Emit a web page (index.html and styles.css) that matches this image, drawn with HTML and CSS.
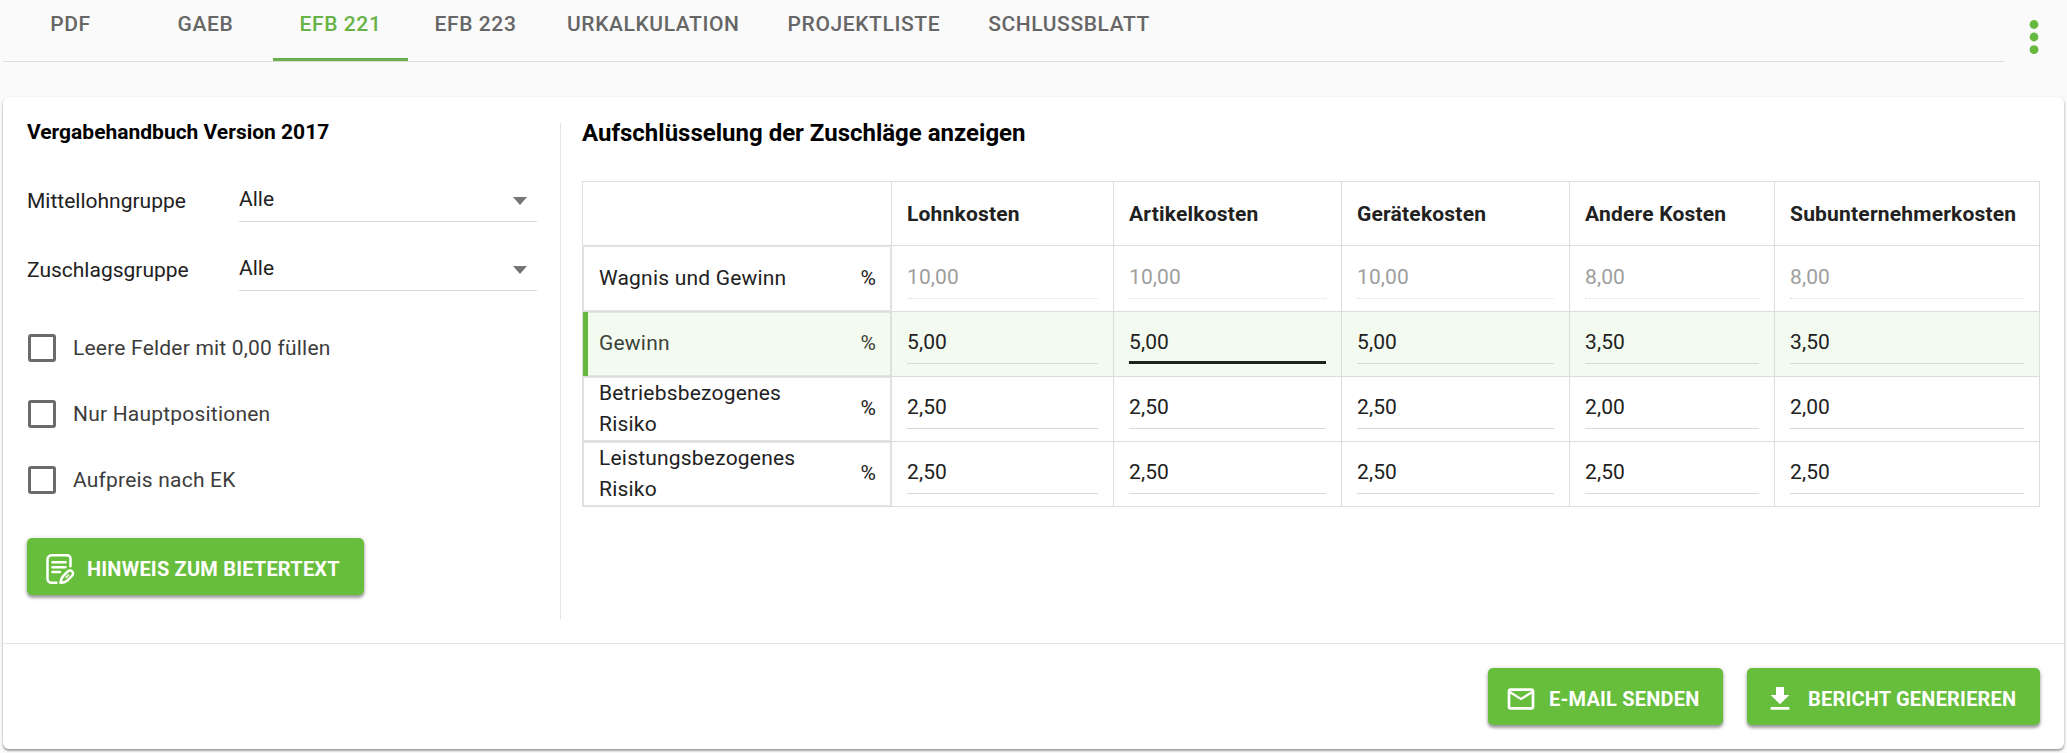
FILE: index.html
```
<!DOCTYPE html>
<html lang="de">
<head>
    <meta charset="utf-8">
    <title>EFB 221</title>
    <link rel="stylesheet" href="styles.css">
</head>
<body>
    <div class="topbar">
        <div class="tabs">
            <div class="tab">PDF</div>
            <div class="tab">GAEB</div>
            <div class="tab active">EFB 221</div>
            <div class="tab">EFB 223</div>
            <div class="tab">URKALKULATION</div>
            <div class="tab">PROJEKTLISTE</div>
            <div class="tab">SCHLUSSBLATT</div>
        </div>
        <svg class="more" viewBox="0 0 10 36">
            <circle cx="5" cy="5.5" r="4.4" />
            <circle cx="5" cy="18" r="4.4" />
            <circle cx="5" cy="30.7" r="4.4" />
        </svg>
    </div>

    <div class="card">
        <div class="content">
            <div class="options">
                <h4>Vergabehandbuch Version 2017</h4>
                <div class="field">
                    <label>Mittellohngruppe</label>
                    <div class="select"><span>Alle</span><i class="arrow"></i></div>
                </div>
                <div class="field">
                    <label>Zuschlagsgruppe</label>
                    <div class="select"><span>Alle</span><i class="arrow"></i></div>
                </div>
                <div class="checks">
                    <div class="check"><i class="box"></i><span>Leere Felder mit 0,00 füllen</span></div>
                    <div class="check"><i class="box"></i><span>Nur Hauptpositionen</span></div>
                    <div class="check"><i class="box"></i><span>Aufpreis nach EK</span></div>
                </div>
                <button class="btn note">
                    <svg width="32" height="32" viewBox="0 0 32 32" fill="none" stroke="#fff" stroke-width="2.5" stroke-linecap="round" stroke-linejoin="round">
                        <path d="M13.500 29.700H8.500a4 4 0 0 1-4-4V6.200a4 4 0 0 1 4-4h15.500a3.500 3.500 0 0 1 3.500 3.500v7.500" />
                        <path d="M9.500 9.300h13M9.500 14.200h13M9.500 19h7.500" />
                        <path d="M17.500 29.700c.3-3 1-5 2.700-6.700l4.600-4.600a3 3 0 0 1 4.300 4.300l-4.600 4.600c-1.700 1.700-4 2.200-7 2.400z" />
                        <path d="M23 24.500l2.500-2.500" stroke-width="1.500" />
                    </svg>
                    <span>HINWEIS ZUM BIETERTEXT</span>
                </button>
            </div>

            <div class="surcharges">
                <h3>Aufschlüsselung der Zuschläge anzeigen</h3>
                <div class="grid">
                    <div class="row head">
                        <div class="cell"></div>
                        <div class="cell">Lohnkosten</div>
                        <div class="cell">Artikelkosten</div>
                        <div class="cell">Gerätekosten</div>
                        <div class="cell">Andere Kosten</div>
                        <div class="cell">Subunternehmerkosten</div>
                    </div>
                    <div class="row disabled">
                        <div class="cell name"><span>Wagnis und Gewinn</span><span>%</span></div>
                        <div class="cell"><div class="value">10,00</div></div>
                        <div class="cell"><div class="value">10,00</div></div>
                        <div class="cell"><div class="value">10,00</div></div>
                        <div class="cell"><div class="value">8,00</div></div>
                        <div class="cell"><div class="value">8,00</div></div>
                    </div>
                    <div class="row selected">
                        <div class="cell name"><span>Gewinn</span><span>%</span></div>
                        <div class="cell"><div class="value">5,00</div></div>
                        <div class="cell"><div class="value focus">5,00</div></div>
                        <div class="cell"><div class="value">5,00</div></div>
                        <div class="cell"><div class="value">3,50</div></div>
                        <div class="cell"><div class="value">3,50</div></div>
                    </div>
                    <div class="row">
                        <div class="cell name"><span>Betriebsbezogenes Risiko</span><span>%</span></div>
                        <div class="cell"><div class="value">2,50</div></div>
                        <div class="cell"><div class="value">2,50</div></div>
                        <div class="cell"><div class="value">2,50</div></div>
                        <div class="cell"><div class="value">2,00</div></div>
                        <div class="cell"><div class="value">2,00</div></div>
                    </div>
                    <div class="row">
                        <div class="cell name"><span>Leistungsbezogenes Risiko</span><span>%</span></div>
                        <div class="cell"><div class="value">2,50</div></div>
                        <div class="cell"><div class="value">2,50</div></div>
                        <div class="cell"><div class="value">2,50</div></div>
                        <div class="cell"><div class="value">2,50</div></div>
                        <div class="cell"><div class="value">2,50</div></div>
                    </div>
                </div>
            </div>
        </div>

        <div class="footer">
            <button class="btn mail">
                <svg width="32" height="32" viewBox="0 0 24 24" fill="#fff">
                    <path d="M22 6c0-1.100-.9-2-2-2H4c-1.100 0-2 .9-2 2v12c0 1.100.9 2 2 2h16c1.100 0 2-.9 2-2V6zm-2 0l-8 5-8-5h16zm0 12H4V8l8 5 8-5v10z" />
                </svg>
                <span>E-MAIL SENDEN</span>
            </button>
            <button class="btn report">
                <svg width="32" height="32" viewBox="0 0 24 24" fill="#fff">
                    <path d="M19 9h-4V3H9v6H5l7 7 7-7zM5 18v2h14v-2H5z" />
                </svg>
                <span>BERICHT GENERIEREN</span>
            </button>
        </div>
    </div>
</body>
</html>
```
FILE: styles.css
```
* {
    box-sizing: border-box;
}

body {
    margin: 0;
    height: 753px;
    overflow: hidden;
    background: #fafafa;
    color: #212121;
    font-family: Roboto, "Liberation Sans", sans-serif;
    font-size: 21px;
}

h3, h4 {
    margin: 0;
    color: #000;
    font-weight: 700;
}

.topbar {
    display: flex;
    height: 97px;
    padding-left: 3px;
}

.tabs {
    display: flex;
    width: 2001px;
    height: 62px;
    border-bottom: 1px solid #dcdcdc;
}

.tab {
    min-width: 135px;
    height: 61px;
    padding: 0 24px;
    color: #666;
    font-weight: 500;
    line-height: 48px;
    letter-spacing: 0.6px;
    text-align: center;
    white-space: nowrap;
}

.tab.active {
    color: #67b346;
    border-bottom: 3px solid #6ab04c;
}

.more {
    width: 10px;
    height: 36px;
    margin: 19px 0 0 25px;
    fill: #67b83f;
}

.card {
    width: 2061px;
    height: 652px;
    margin-left: 3px;
    background: #fff;
    border-radius: 6px;
    box-shadow: 0 2px 2px rgba(0, 0, 0, 0.25), 0 1px 3px rgba(0, 0, 0, 0.2);
}

.content {
    display: flex;
    height: 546px;
    padding: 23px 24px 24px;
}

.options {
    width: 535px;
    margin-top: 3px;
    border-right: 1px solid #e4e4e4;
}

.options h4 {
    height: 56px;
    font-size: 21px;
    line-height: 18px;
}

.field {
    display: flex;
    width: 510px;
    height: 69px;
}

.field label {
    width: 212px;
    line-height: 45px;
}

.select {
    display: flex;
    flex: 1;
    justify-content: space-between;
    height: 43px;
    border-bottom: 1px solid #d8d8d8;
    line-height: 41px;
}

.arrow {
    width: 0;
    height: 0;
    margin: 18px 10px 0 0;
    border: 7px solid transparent;
    border-top: 8px solid #757575;
    border-bottom: 0;
}

.checks {
    height: 201px;
    margin-top: -2px;
    padding-left: 1px;
    color: #3c3c3c;
    letter-spacing: 0.2px;
}

.check {
    display: flex;
    align-items: center;
    gap: 17px;
    height: 66px;
    line-height: 28px;
}

.box {
    width: 28px;
    height: 28px;
    border: 3px solid #6b6b6b;
    border-radius: 3px;
}

.btn {
    display: flex;
    align-items: center;
    height: 57px;
    padding: 5px 0 0 16px;
    border: 0;
    border-radius: 5px;
    background: #67bd3c;
    box-shadow: 0 3px 3px rgba(0, 0, 0, 0.3), 0 1px 5px rgba(0, 0, 0, 0.2);
    color: #fff;
    font-family: inherit;
    font-size: 20px;
    font-weight: 700;
    letter-spacing: 0.2px;
    white-space: nowrap;
}

.btn span {
    margin-left: 12px;
}

.note {
    width: 337px;
    margin-top: 22px;
}

.surcharges {
    flex: 1;
    padding-left: 21px;
}

.surcharges h3 {
    height: 61px;
    font-size: 24px;
    line-height: 26px;
}

.grid {
    width: 1458px;
    border-top: 1px solid #ddd;
    border-left: 1px solid #ddd;
    letter-spacing: 0.2px;
}

.row {
    display: grid;
    grid-template-columns: 309px 222px 228px 228px 205px 265px;
    height: 65px;
}

.row.head {
    height: 64px;
}

.row.disabled {
    height: 66px;
}

.cell {
    display: flex;
    padding-left: 15px;
    padding-right: 15px;
    border-right: 1px solid #ddd;
    border-bottom: 1px solid #ddd;
}

.head .cell {
    align-items: center;
    font-weight: 700;
}

.name {
    align-items: center;
    justify-content: space-between;
    padding-left: 16px;
    padding-bottom: 1px;
    line-height: 31px;
    box-shadow: inset 0 0 0 1px #e4e4e4;
}

.name span:first-child {
    width: 205px;
}

.value {
    flex: 1;
    height: 52px;
    border-bottom: 1px solid #d8d8d8;
    line-height: 61px;
    letter-spacing: 0.1px;
}

.disabled .value {
    height: 53px;
    padding-top: 1px;
    color: #9e9e9e;
    border-bottom-style: dotted;
}

.selected {
    background: #f3faf0;
}

.selected .cell {
    border-color: #d9ded7;
}

.selected .name {
    color: #3c4239;
    box-shadow: inset 5px 0 0 #67b83f, inset 0 0 0 1px #dfe5dc;
}

.value.focus {
    border-bottom: 3px solid #1e241b;
}

.footer {
    display: flex;
    justify-content: flex-end;
    gap: 24px;
    padding: 24px 24px 0 0;
    border-top: 1px solid #e6e6e6;
}

.mail {
    width: 235px;
    padding-left: 17px;
}

.report {
    width: 293px;
    padding-left: 17px;
}
```
